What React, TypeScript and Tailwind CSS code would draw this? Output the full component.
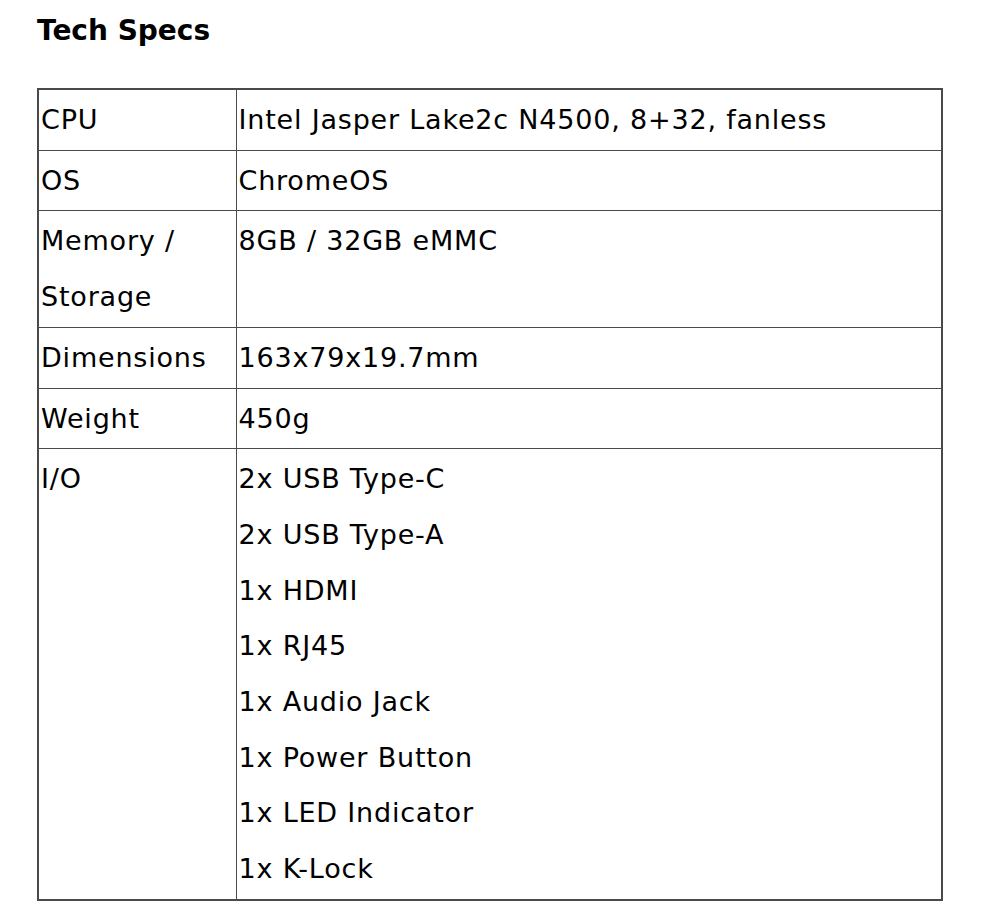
import React from "react";

const rows: { label: string; values: string[] }[] = [
  { label: "CPU", values: ["Intel Jasper Lake2c N4500, 8+32, fanless"] },
  { label: "OS", values: ["ChromeOS"] },
  { label: "Memory / Storage", values: ["8GB / 32GB eMMC"] },
  { label: "Dimensions", values: ["163x79x19.7mm"] },
  { label: "Weight", values: ["450g"] },
  {
    label: "I/O",
    values: [
      "2x USB Type-C",
      "2x USB Type-A",
      "1x HDMI",
      "1x RJ45",
      "1x Audio Jack",
      "1x Power Button",
      "1x LED Indicator",
      "1x K-Lock",
    ],
  },
];

export default function App() {
  return (
    <div
      className="bg-white text-black min-h-[922px] pl-[37px] pt-[12px]"
      style={{ fontFamily: '"DejaVu Sans", "Noto Sans", sans-serif' }}
    >
      <h2 className="text-[28px] font-bold leading-[38px] h-[76px]">Tech Specs</h2>
      <table className="w-[906px] border-collapse border-2 border-[#4a4a4a] text-[27px] tracking-[0.8px] leading-[55.7px]">
        <tbody>
          {rows.map((r) => (
            <tr key={r.label}>
              <td className="w-[198px] border border-[#4a4a4a] px-[2px] py-[2px] align-top">
                {r.label}
              </td>
              <td className="border border-[#4a4a4a] px-[2px] py-[2px] align-top">
                {r.values.map((v) => (
                  <div key={v}>{v}</div>
                ))}
              </td>
            </tr>
          ))}
        </tbody>
      </table>
    </div>
  );
}
